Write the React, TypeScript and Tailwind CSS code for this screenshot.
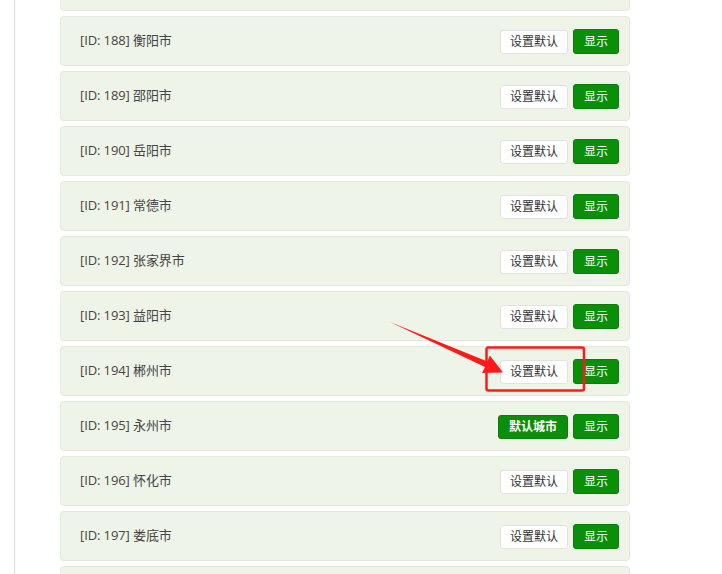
import React from "react";

const rows: { id: number; name: string; isDefault?: boolean; empty?: boolean }[] = [
  { id: 187, name: "", empty: true },
  { id: 188, name: "衡阳市" },
  { id: 189, name: "邵阳市" },
  { id: 190, name: "岳阳市" },
  { id: 191, name: "常德市" },
  { id: 192, name: "张家界市" },
  { id: 193, name: "益阳市" },
  { id: 194, name: "郴州市" },
  { id: 195, name: "永州市", isDefault: true },
  { id: 196, name: "怀化市" },
  { id: 197, name: "娄底市" },
  { id: 198, name: "", empty: true },
];

const font = { fontFamily: '"Open Sans", "Noto Sans CJK SC", "Noto Sans", sans-serif' };

export default function App() {
  return (
    <div className="relative w-[722px] h-[574px] overflow-hidden bg-white" style={font}>
      <div className="flex h-full">
        <div className="w-[14px] shrink-0" />
        <div className="w-px shrink-0 bg-[#dddddd] h-full" />
        <div className="w-[45px] shrink-0" />
        <div className="w-[570px] flex flex-col gap-[5px] mt-[-39px]">
          {rows.map((r) => (
            <div
              key={r.id}
              className="h-[50px] shrink-0 flex items-center justify-between rounded-[4px] border border-[#e3e8dc] bg-[#eff4e9] pl-[19px] pr-[10px]"
            >
              {r.empty ? null : (
                <>
                  <span className="text-[13px] text-[#444444] leading-none mb-[2px] tracking-[-0.1px]">
                    [ID: {r.id}] {r.name}
                  </span>
                  <div className="flex items-center gap-[5px] mt-px">
                    {r.isDefault ? (
                      <button className="h-[24px] w-[70px] rounded-[3px] border border-[#0a7d0a] bg-[#0b8f0b] text-[12px] text-white leading-none font-bold">
                        默认城市
                      </button>
                    ) : (
                      <button className="h-[24px] w-[68px] rounded-[3px] border border-[#e2e2e2] bg-white text-[12px] text-[#333333] leading-none">
                        设置默认
                      </button>
                    )}
                    <button className="h-[25px] w-[46px] rounded-[3px] border border-[#0a7d0a] bg-[#0b8f0b] text-[12px] text-white leading-none">
                      显示
                    </button>
                  </div>
                </>
              )}
            </div>
          ))}
        </div>
      </div>
      <svg className="absolute left-0 top-0 pointer-events-none" width="722" height="574">
        <polygon
          points="390,322 487.4,361.5 489.8,355.5 503,372.5 482,373 485,367"
          fill="#ff1a1a"
        />
        <rect x="486.5" y="347.5" width="97.5" height="43" rx="2" fill="none" stroke="#ff1a1a" strokeWidth="2.5" />
      </svg>
    </div>
  );
}
